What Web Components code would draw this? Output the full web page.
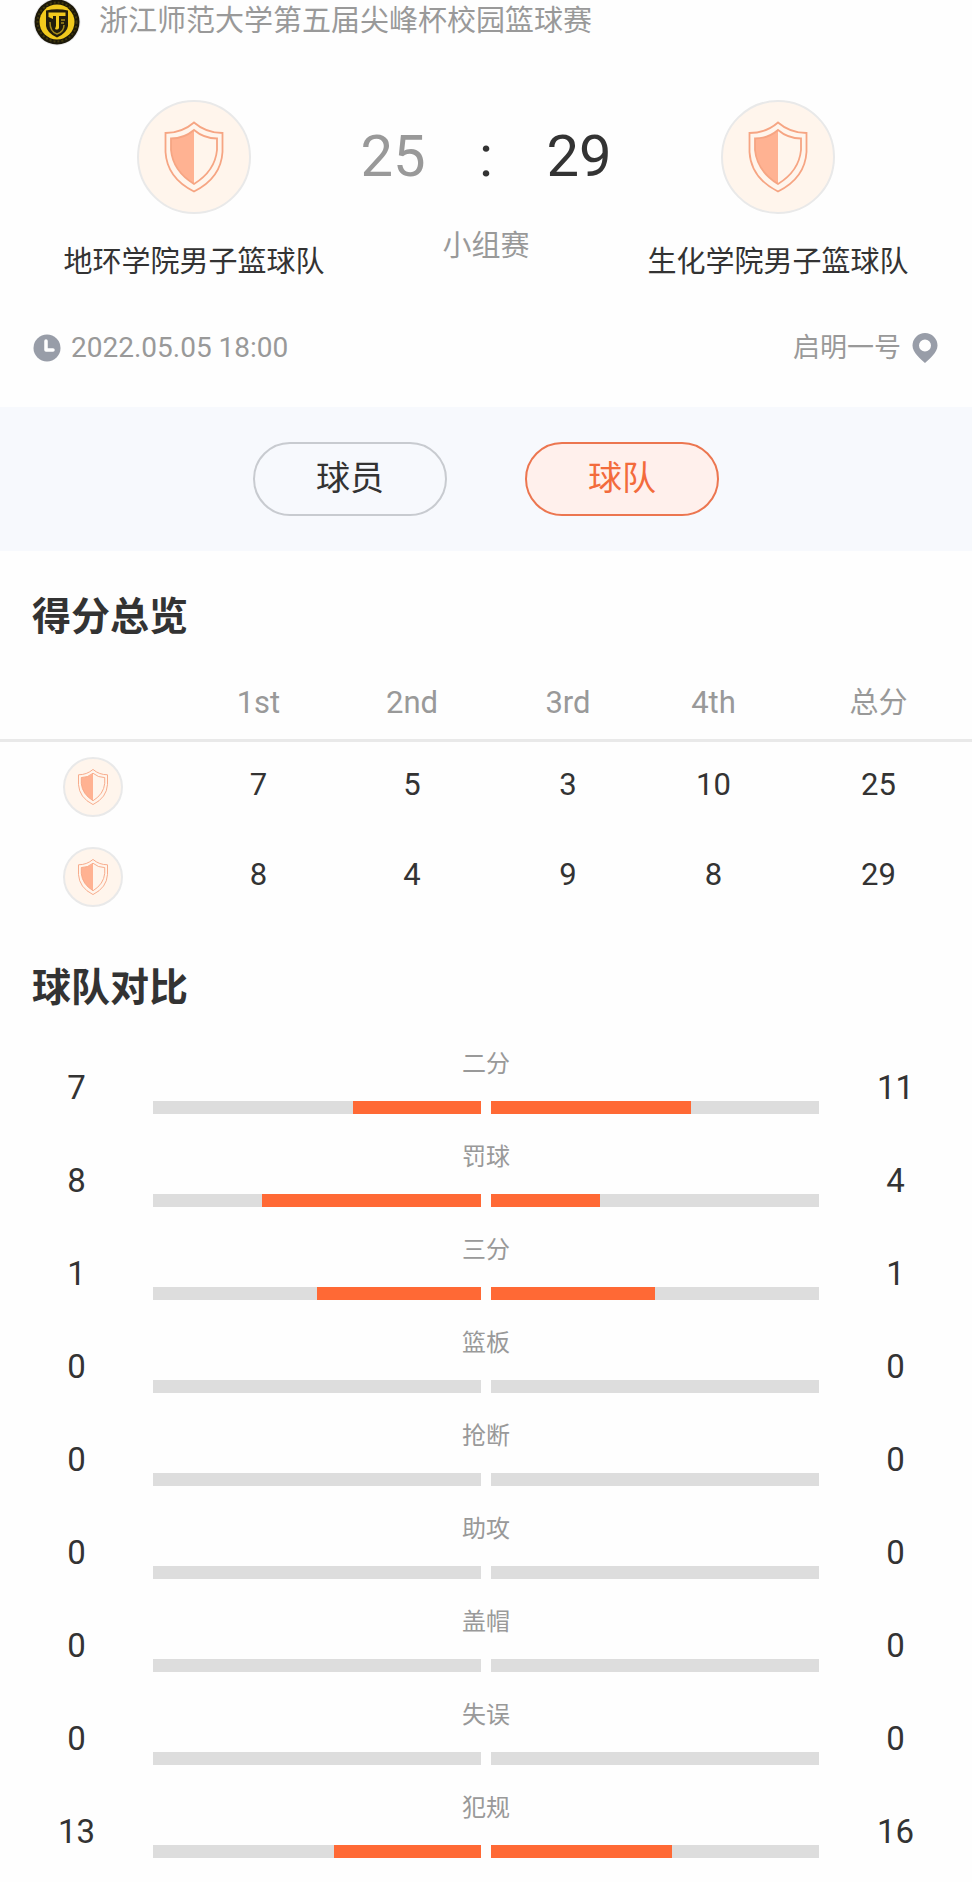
<!DOCTYPE html>
<html lang="zh-CN">
<head>
<meta charset="utf-8">
<meta name="viewport" content="width=device-width, initial-scale=1">
<title>浙江师范大学第五届尖峰杯校园篮球赛</title>
<style>
  html { background: #fefefe; }
  body {
    margin: 0;
    font-family: Roboto, "Noto Sans CJK SC", sans-serif;
    color: #333;
    --muted: #999;
    --accent: #ff6935;
    --track: #ddd;
  }
</style>
</head>
<body>
<match-page></match-page>

<script>
const define = (name, html, setup) => {
  const template = document.createElement('template');
  template.innerHTML = html;
  customElements.define(name, class extends HTMLElement {
    connectedCallback() {
      if (this.shadowRoot) return;
      const root = this.attachShadow({ mode: 'open' });
      root.append(template.content.cloneNode(true));
      if (setup) setup(this, root);
    }
  });
};

define('team-badge', `
  <style>
    :host { display: block; box-sizing: border-box; width: 114px; height: 114px; border: 2px solid #e9e9e9; border-radius: 50%; background: #fff5ec; }
    :host([small]) { width: 60px; height: 60px; }
    svg { display: block; width: 100%; height: 100%; }
  </style>
  <svg viewBox="0 0 110 110" aria-hidden="true">
    <path d="M55 20.500Q43 31 26.500 31V50Q28 76 55 89.500Q82 76 83.500 50V31Q67 31 55 20.500Z" fill="none" stroke="#f6a583" stroke-width="1.800"/>
    <path d="M55 28Q45 36.500 32 36.500V48Q34 69 55 82Z" fill="#ffb292"/>
    <path d="M55 28Q45 36.500 32 36.500V48Q34 69 55 82Q76 69 78 48V36.500Q65 36.500 55 28Z" fill="none" stroke="#f6a583" stroke-width="1.800"/>
  </svg>`);

define('league-title', `
  <style>
    :host { display: flex; align-items: center; gap: 18px; height: 44px; padding: 0 33px; color: var(--muted); }
    svg { flex: none; width: 48px; height: 48px; }
    h1 { margin: 0; font-size: 29px; line-height: 40px; font-weight: 400; padding-bottom: 2px; }
  </style>
  <svg viewBox="0 0 48 48" aria-hidden="true">
    <circle cx="24" cy="24" r="23.500" fill="#e9e9ec"/>
    <circle cx="24" cy="24" r="22.500" fill="#1c1808"/>
    <circle cx="24" cy="24" r="19.500" fill="none" stroke="#40380d" stroke-width="2" stroke-dasharray="2 2"/>
    <circle cx="24" cy="24" r="17.500" fill="#f1c91d"/>
    <path d="M13 12.500Q24 10 35 12.500V28Q34 35 24 39.500Q14 35 13 28Z" fill="#221d0b"/>
    <path d="M15.500 14.500H32.500V18H26V30Q25 32.500 22 31L23 28V18H20V21L15.500 19Z" fill="#f1c91d"/>
    <path d="M28 22H32M28 25H31M17 24Q17 34 24 36Q31 34 31 27" fill="none" stroke="#a58a1b" stroke-width="1.500"/>
  </svg>
  <h1><slot></slot></h1>`);

define('match-team', `
  <style>
    :host { display: flex; flex-direction: column; align-items: center; gap: 28px; }
    h2 { margin: 0; font-size: 29px; line-height: 40px; font-weight: 400; white-space: nowrap; }
  </style>
  <team-badge></team-badge>
  <h2><slot></slot></h2>`);

define('match-score', `
  <style>
    :host { display: block; text-align: center; }
    .score { display: grid; grid-template-columns: 66px 1fr 66px; margin: 0 34px; font-size: 58px; line-height: 68px; padding-top: 22px; }
    .lost { color: var(--muted); }
    p { margin: 36px 0 0; font-size: 29px; line-height: 40px; color: var(--muted); }
  </style>
  <div class="score"><span class="lost"><slot name="home"></slot></span><span>:</span><span><slot name="away"></slot></span></div>
  <p><slot></slot></p>`);

define('match-info', `
  <style>
    :host { display: flex; align-items: center; justify-content: space-between; padding: 0 33px; color: var(--muted); }
    div { display: flex; align-items: center; gap: 10px; line-height: 40px; }
    time { font-size: 28px; }
    span { font-size: 27px; }
    svg { display: block; }
  </style>
  <div>
    <svg width="28" height="28" viewBox="0 0 28 28" aria-hidden="true"><circle cx="14" cy="14" r="13.500" fill="#989da8"/><path d="M13 7V16H20" fill="none" stroke="#fff" stroke-width="3.500" stroke-linecap="round" stroke-linejoin="round"/></svg>
    <time datetime="2022-05-05T18:00"><slot name="time"></slot></time>
  </div>
  <div>
    <span><slot name="place"></slot></span>
    <svg width="28" height="32" viewBox="0 0 28 32" aria-hidden="true"><path fill-rule="evenodd" d="M14 1A12.500 12.500 0 0 0 1.500 13.500C1.500 21 10 27 14 31C18 27 26.500 21 26.500 13.500A12.500 12.500 0 0 0 14 1ZM14 7.500A6 6 0 1 1 14 19.500A6 6 0 1 1 14 7.500Z" fill="#989da8"/></svg>
  </div>`);

define('view-switch', `
  <style>
    :host { display: flex; justify-content: center; gap: 78px; padding: 35px 0; background: #f7f9fd; }
    button { box-sizing: border-box; width: 194px; height: 74px; padding: 0 0 2px; border: 2px solid #c8cbd0; border-radius: 37px; background: none; color: #333; font: inherit; font-size: 34px; line-height: 40px; }
    button[aria-pressed="true"] { border-color: #ec7650; background: #fff0ec; color: #f36b3c; }
  </style>
  <button type="button" aria-pressed="false">球员</button>
  <button type="button" aria-pressed="true">球队</button>`,
  (host, root) => {
    const buttons = [...root.querySelectorAll('button')];
    buttons.forEach(b => b.addEventListener('click', () =>
      buttons.forEach(o => o.setAttribute('aria-pressed', String(o === b)))));
  });

define('section-title', `
  <style>
    :host { display: block; padding: 0 32px; }
    h2 { margin: 0; font-size: 39px; line-height: 56px; font-weight: 700; }
  </style>
  <h2><slot></slot></h2>`);

define('score-table', `
  <style>
    :host { display: block; }
    table { width: 100%; border-collapse: separate; border-spacing: 0; table-layout: fixed; text-align: center; font-size: 31px; line-height: 40px; }
    th, td { padding: 0; font-weight: 400; }
    thead th, thead td { box-sizing: border-box; height: 82px; padding-top: 6px; border-bottom: 3px solid #e9e9e9; color: var(--muted); }
    thead th:last-child { font-size: 29px; }
    tbody tr { height: 90px; }
    tbody td { padding-bottom: 4px; }
    team-badge { margin: 0 auto; }
  </style>
  <table>
    <colgroup></colgroup>
    <thead><tr><td></td><th scope="col">1st</th><th scope="col">2nd</th><th scope="col">3rd</th><th scope="col">4th</th><th scope="col">总分</th></tr></thead>
    <tbody></tbody>
  </table>`,
  (host, root) => {
    const weights = [187, 143, 164, 148, 143, 187];
    const total = weights.reduce((a, b) => a + b);
    root.querySelector('colgroup').innerHTML =
      weights.map(w => `<col style="width:${w / total * 100}%">`).join('');
    const rows = [
      ['地环学院男子篮球队', 7, 5, 3, 10, 25],
      ['生化学院男子篮球队', 8, 4, 9, 8, 29]
    ];
    root.querySelector('tbody').innerHTML = rows.map(([team, ...points]) =>
      `<tr><th scope="row" aria-label="${team}"><team-badge small></team-badge></th>${points.map(p => `<td>${p}</td>`).join('')}</tr>`).join('');
  });

define('stat-row', `
  <style>
    :host { display: grid; grid-template-columns: 153px 1fr 153px; padding-bottom: 24px; text-align: center; }
    .value { align-self: end; font-size: 33px; line-height: 52px; }
    .label { font-size: 24px; line-height: 38px; color: var(--muted); }
    .bars { display: grid; grid-template-columns: 1fr 1fr; gap: 10px; margin-top: 18px; }
    .track { display: flex; height: 13px; background: var(--track); }
    .track:first-child { justify-content: flex-end; }
    .fill { background: var(--accent); }
  </style>
  <span class="value"></span>
  <div>
    <div class="label"><slot></slot></div>
    <div class="bars"><div class="track"><div class="fill"></div></div><div class="track"><div class="fill"></div></div></div>
  </div>
  <span class="value"></span>`,
  (host, root) => {
    const pair = [+host.getAttribute('home'), +host.getAttribute('away')];
    const sum = pair[0] + pair[1];
    const values = root.querySelectorAll('.value');
    const fills = root.querySelectorAll('.fill');
    pair.forEach((n, i) => {
      values[i].textContent = n;
      fills[i].style.width = (sum ? n / sum * 100 : 0) + '%';
    });
  });

define('match-page', `
  <style>
    :host { display: block; }
    header { display: block; }
    .teams { display: grid; grid-template-columns: 264px 1fr 264px; padding: 56px 62px 0; }
    match-info { margin-top: 46px; padding-bottom: 39px; }
    .overview { margin-top: 38px; }
    score-table { margin-top: 15px; }
    .compare { margin-top: 38px; }
    .stats { margin-top: 29px; }
  </style>
  <header>
    <league-title>浙江师范大学第五届尖峰杯校园篮球赛</league-title>
    <div class="teams">
      <match-team>地环学院男子篮球队</match-team>
      <match-score><span slot="home">25</span><span slot="away">29</span>小组赛</match-score>
      <match-team>生化学院男子篮球队</match-team>
    </div>
    <match-info><span slot="time">2022.05.05 18:00</span><span slot="place">启明一号</span></match-info>
  </header>
  <view-switch></view-switch>
  <main>
    <section-title class="overview">得分总览</section-title>
    <score-table></score-table>
    <section-title class="compare">球队对比</section-title>
    <div class="stats">
      <stat-row home="7" away="11">二分</stat-row>
      <stat-row home="8" away="4">罚球</stat-row>
      <stat-row home="1" away="1">三分</stat-row>
      <stat-row home="0" away="0">篮板</stat-row>
      <stat-row home="0" away="0">抢断</stat-row>
      <stat-row home="0" away="0">助攻</stat-row>
      <stat-row home="0" away="0">盖帽</stat-row>
      <stat-row home="0" away="0">失误</stat-row>
      <stat-row home="13" away="16">犯规</stat-row>
    </div>
  </main>`);
</script>
</body>
</html>
